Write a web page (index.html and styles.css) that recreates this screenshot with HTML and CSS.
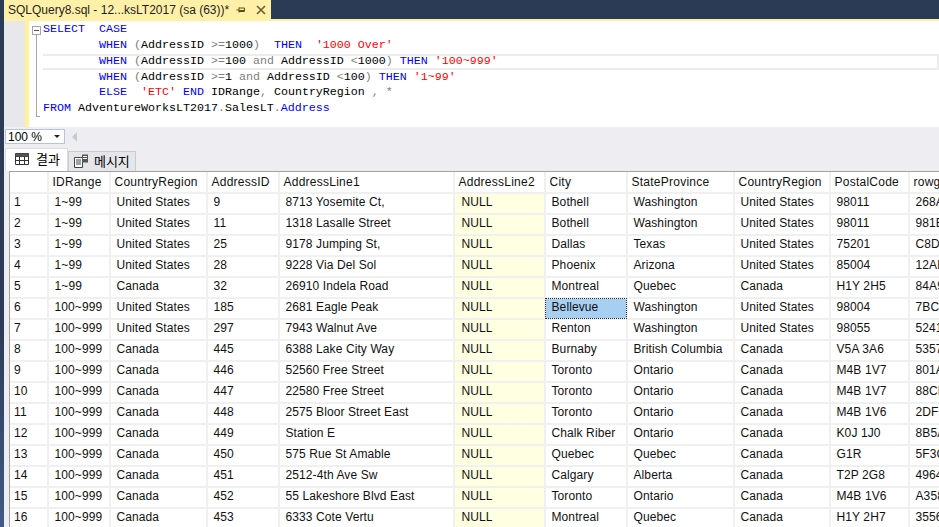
FILE: index.html
```html
<!DOCTYPE html>
<html lang="ko">
<head>
<meta charset="utf-8">
<title>SQLQuery8.sql</title>
<link rel="stylesheet" href="styles.css">
</head>
<body>
<div class="app">
  <div class="strip"></div>
  <div class="main">
    <div class="tabbar">
      <div class="doc-tab">
        <span class="doc-title">SQLQuery8.sql - 12...ksLT2017 (sa (63))*</span>
        <svg class="pin" width="10" height="10" viewBox="0 0 10 10"><path d="M0.5 5H3M3 2.5V7.5M3 3H8.5V6.5H3M3 5.5H8.5" fill="none" stroke="#5b4f1c"/></svg>
        <svg class="close" width="10" height="10" viewBox="0 0 10 10"><path d="M1 1L9 9M9 1L1 9" fill="none" stroke="#6b6237" stroke-width="1.7"/></svg>
      </div>
    </div>
    <div class="rule"></div>
    <div class="editor">
      <div class="margin"></div>
      <div class="changebar"></div>
      <div class="gutter">
        <div class="fold"><span class="minus"></span></div>
        <div class="foldline"></div>
        <div class="foldtick"></div>
      </div>
      <div class="code">
        <div class="line"><b>SELECT</b>  <b>CASE</b></div>
        <div class="line">        <b>WHEN</b> <i>(</i>AddressID <i>&gt;=</i>1000<i>)</i>  <b>THEN</b>  <u>'1000 Over'</u></div>
        <div class="line current">        <b>WHEN</b> <i>(</i>AddressID <i>&gt;=</i>100 <i>and</i> AddressID <i>&lt;</i>1000<i>)</i> <b>THEN</b> <u>'100~999'</u></div>
        <div class="line">        <b>WHEN</b> <i>(</i>AddressID <i>&gt;=</i>1 <i>and</i> AddressID <i>&lt;</i>100<i>)</i> <b>THEN</b> <u>'1~99'</u></div>
        <div class="line">        <b>ELSE</b>  <u>'ETC'</u> <b>END</b> IDRange<i>,</i> CountryRegion <i>,</i> <i>*</i></div>
        <div class="line"><b>FROM</b> AdventureWorksLT2017<i>.</i>SalesLT<i>.</i><b>Address</b></div>
      </div>
    </div>
    <div class="zoombar">
      <div class="zoombox"><span>100 %</span><span class="caret"></span></div>
      <span class="scroll-left"></span>
    </div>
    <div class="result-tabs">
      <div class="rtab active">
        <svg width="14" height="12" viewBox="0 0 14 12"><path d="M.5.5h13v11H.5zM.5 3.5h13M.5 7.5h13M4.5 3.5v8M9.5 3.5v8" fill="none" stroke="#333"/><path d="M.5.5h13v3H.5z" fill="#555"/></svg>
        <span>결과</span>
      </div>
      <div class="rtab">
        <svg width="15" height="14" viewBox="0 0 15 14"><path d="M.5 3.5h8v10h-8z" fill="#fff" stroke="#444"/><path d="M2 6h5M2 8h5M2 10h5" stroke="#444"/><path d="M8 .5h6v8H8z" fill="#555"/><path d="M9 2.5h4M9 4.5h4" stroke="#fff"/></svg>
        <span>메시지</span>
      </div>
    </div>
    <div class="grid-wrap">
      <table class="grid">
        <colgroup>
          <col class="c0"><col class="c1"><col class="c2"><col class="c3"><col class="c4"><col class="c5"><col class="c6"><col class="c7"><col class="c8"><col class="c9"><col class="c10">
        </colgroup>
        <thead>
          <tr><th></th><th>IDRange</th><th>CountryRegion</th><th>AddressID</th><th>AddressLine1</th><th>AddressLine2</th><th>City</th><th>StateProvince</th><th>CountryRegion</th><th>PostalCode</th><th>rowguid</th></tr>
        </thead>
        <tbody>
          <tr><td class="num">1</td><td>1~99</td><td>United States</td><td>9</td><td>8713 Yosemite Ct,</td><td class="null">NULL</td><td>Bothell</td><td>Washington</td><td>United States</td><td>98011</td><td>268A</td></tr>
          <tr><td class="num">2</td><td>1~99</td><td>United States</td><td>11</td><td>1318 Lasalle Street</td><td class="null">NULL</td><td>Bothell</td><td>Washington</td><td>United States</td><td>98011</td><td>981E</td></tr>
          <tr><td class="num">3</td><td>1~99</td><td>United States</td><td>25</td><td>9178 Jumping St,</td><td class="null">NULL</td><td>Dallas</td><td>Texas</td><td>United States</td><td>75201</td><td>C8D</td></tr>
          <tr><td class="num">4</td><td>1~99</td><td>United States</td><td>28</td><td>9228 Via Del Sol</td><td class="null">NULL</td><td>Phoenix</td><td>Arizona</td><td>United States</td><td>85004</td><td>12AB</td></tr>
          <tr><td class="num">5</td><td>1~99</td><td>Canada</td><td>32</td><td>26910 Indela Road</td><td class="null">NULL</td><td>Montreal</td><td>Quebec</td><td>Canada</td><td>H1Y 2H5</td><td>84A9</td></tr>
          <tr><td class="num">6</td><td>100~999</td><td>United States</td><td>185</td><td>2681 Eagle Peak</td><td class="null">NULL</td><td class="selected">Bellevue</td><td>Washington</td><td>United States</td><td>98004</td><td>7BC</td></tr>
          <tr><td class="num">7</td><td>100~999</td><td>United States</td><td>297</td><td>7943 Walnut Ave</td><td class="null">NULL</td><td>Renton</td><td>Washington</td><td>United States</td><td>98055</td><td>5241</td></tr>
          <tr><td class="num">8</td><td>100~999</td><td>Canada</td><td>445</td><td>6388 Lake City Way</td><td class="null">NULL</td><td>Burnaby</td><td>British Columbia</td><td>Canada</td><td>V5A 3A6</td><td>5357</td></tr>
          <tr><td class="num">9</td><td>100~999</td><td>Canada</td><td>446</td><td>52560 Free Street</td><td class="null">NULL</td><td>Toronto</td><td>Ontario</td><td>Canada</td><td>M4B 1V7</td><td>801A</td></tr>
          <tr><td class="num">10</td><td>100~999</td><td>Canada</td><td>447</td><td>22580 Free Street</td><td class="null">NULL</td><td>Toronto</td><td>Ontario</td><td>Canada</td><td>M4B 1V7</td><td>88CE</td></tr>
          <tr><td class="num">11</td><td>100~999</td><td>Canada</td><td>448</td><td>2575 Bloor Street East</td><td class="null">NULL</td><td>Toronto</td><td>Ontario</td><td>Canada</td><td>M4B 1V6</td><td>2DF6</td></tr>
          <tr><td class="num">12</td><td>100~999</td><td>Canada</td><td>449</td><td>Station E</td><td class="null">NULL</td><td>Chalk Riber</td><td>Ontario</td><td>Canada</td><td>K0J 1J0</td><td>8B5A</td></tr>
          <tr><td class="num">13</td><td>100~999</td><td>Canada</td><td>450</td><td>575 Rue St Amable</td><td class="null">NULL</td><td>Quebec</td><td>Quebec</td><td>Canada</td><td>G1R</td><td>5F3C</td></tr>
          <tr><td class="num">14</td><td>100~999</td><td>Canada</td><td>451</td><td>2512-4th Ave Sw</td><td class="null">NULL</td><td>Calgary</td><td>Alberta</td><td>Canada</td><td>T2P 2G8</td><td>4964</td></tr>
          <tr><td class="num">15</td><td>100~999</td><td>Canada</td><td>452</td><td>55 Lakeshore Blvd East</td><td class="null">NULL</td><td>Toronto</td><td>Ontario</td><td>Canada</td><td>M4B 1V6</td><td>A358</td></tr>
          <tr><td class="num">16</td><td>100~999</td><td>Canada</td><td>453</td><td>6333 Cote Vertu</td><td class="null">NULL</td><td>Montreal</td><td>Quebec</td><td>Canada</td><td>H1Y 2H7</td><td>3556</td></tr>
        </tbody>
      </table>
    </div>
  </div>
</div>
</body>
</html>
```
FILE: styles.css
```css
* { box-sizing: border-box; }
html, body { margin: 0; padding: 0; }
body { width: 939px; height: 527px; overflow: hidden; font-family: "Liberation Sans", "Noto Sans CJK KR", sans-serif; font-size: 12px; color: #000; background: #eeeef2; }
.app { display: flex; width: 939px; height: 527px; }
.strip { width: 4px; flex: none; background: linear-gradient(#2b3a55, #2b3a55 60%, #3f5a85); }
.main { flex: 1; min-width: 0; display: flex; flex-direction: column; }

.tabbar { height: 19px; flex: none; background: #2b3a55; display: flex; }
.doc-tab { width: 267px; background: #fff0a8; display: flex; align-items: center; font-size: 12px; color: #1e1e1e; }
.doc-title { padding-left: 4px; white-space: pre; flex: 1; }
.pin { margin-right: 10px; }
.close { margin-right: 5px; }
.rule { height: 2px; flex: none; background: #fff0a8; }

.editor { height: 106px; flex: none; display: flex; background: #fff; }
.margin { width: 21px; background: #e8e8ec; flex: none; }
.changebar { width: 4px; background: #fff299; flex: none; }
.gutter { width: 14px; flex: none; position: relative; background: #fff; }
.fold { position: absolute; left: 3px; top: 5px; width: 9px; height: 9px; border: 1px solid #a5a5a5; }
.minus { display: block; margin: 3px 1px 0; height: 1px; background: #555; }
.foldline { position: absolute; left: 7px; top: 14px; width: 1px; height: 81px; background: #a5a5a5; }
.foldtick { position: absolute; left: 7px; top: 95px; width: 4px; height: 1px; background: #a5a5a5; }
.code { flex: 1; min-width: 0; padding-top: 1.2px; font-family: "Liberation Mono", monospace; font-size: 11.67px; color: #000; }
.line { height: 15.8px; line-height: 15.8px; white-space: pre; }
.line.current { box-shadow: inset 0 0 0 2px #ebebf0; margin-left: -2px; padding-left: 2px; }
.line b { font-weight: normal; color: #0000ff; }
.line i { font-style: normal; color: #808080; }
.line u { text-decoration: none; color: #ff0000; }

.zoombar { height: 17px; flex: none; display: flex; align-items: center; background: #eeeef2; padding-top: 2px; }
.zoombox { width: 60px; height: 15px; margin-left: 1px; background: #fff; border: 1px solid #b9c3d6; display: flex; align-items: center; justify-content: space-between; padding: 0 4px 0 2px; font-size: 12px; }
.caret { width: 0; height: 0; border: 3px solid transparent; border-top-color: #222; border-bottom: 0; }
.scroll-left { width: 0; height: 0; margin-left: 7px; border: 5px solid transparent; border-right: 5px solid #c9c9d0; border-left: 0; }

.result-tabs { height: 27px; flex: none; display: flex; align-items: flex-end; padding-left: 1px; }
.rtab { height: 20px; display: flex; align-items: center; gap: 5px; padding: 0 5px 2px; background: #e6e6ea; border: 1px solid #ccc; border-bottom: 0; font-family: "Noto Sans CJK KR", sans-serif; font-size: 13px; }
.rtab.active { background: #fff; height: 23px; gap: 7px; padding: 0 7px 3px 9px; border-color: #dcdce0; }
.grid-wrap { flex: 1; min-height: 0; margin-left: 5px; border-top: 1px solid #a0a0a0; border-left: 1px solid #a0a0a0; background: #fff; overflow: hidden; }
.grid { table-layout: fixed; border-collapse: collapse; width: 930px; font-size: 12px; letter-spacing: 0.1px; }
.c0 { width: 38px; } .c1 { width: 62px; } .c2 { width: 97px; } .c3 { width: 72px; } .c4 { width: 175px; }
.c5 { width: 91px; } .c6 { width: 82px; } .c7 { width: 107px; } .c8 { width: 96px; } .c9 { width: 79px; } .c10 { width: 31px; }
.grid th, .grid td { height: 21px; padding: 0 0 0 5.5px; border-right: 2px solid #f0f0f0; border-bottom: 2px solid #f0f0f0; white-space: nowrap; overflow: hidden; font-weight: normal; text-align: left; color: #111; }
.grid th { padding-left: 3.5px; letter-spacing: 0.25px; }
.grid td { padding-bottom: 4px; }
.grid td.num { padding-left: 4px; }
.grid td.null { background: #ffffe1; padding-left: 6.5px; }
.grid td.selected { background: #a6cff2; outline: 1px dotted #222; outline-offset: -1px; }
```
